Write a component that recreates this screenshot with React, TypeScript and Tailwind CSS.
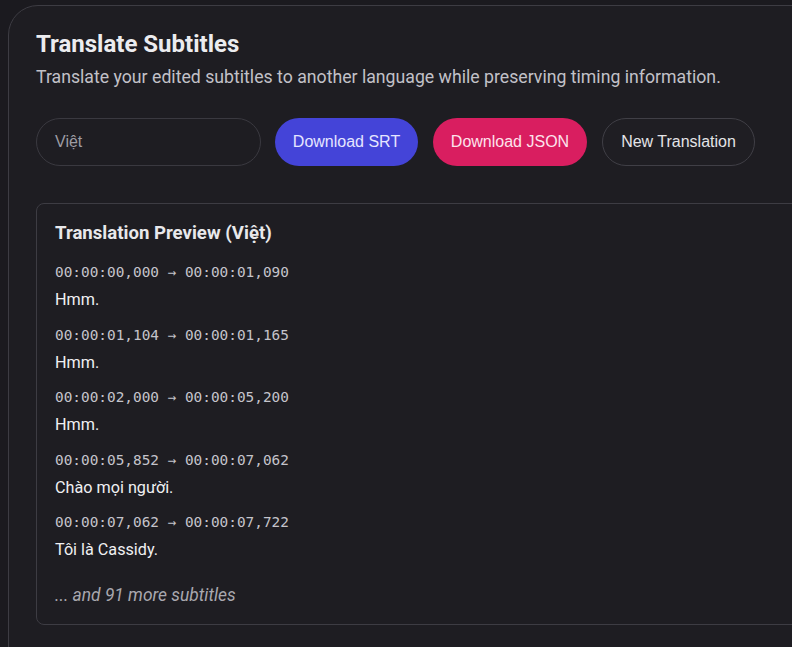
import React from "react";

const entries = [
  { t: "00:00:00,000 → 00:00:01,090", s: "Hmm." },
  { t: "00:00:01,104 → 00:00:01,165", s: "Hmm." },
  { t: "00:00:02,000 → 00:00:05,200", s: "Hmm." },
  { t: "00:00:05,852 → 00:00:07,062", s: "Chào mọi người." },
  { t: "00:00:07,062 → 00:00:07,722", s: "Tôi là Cassidy." },
];

export default function App() {
  return (
    <div className="w-[792px] h-[647px] overflow-hidden bg-[#1b1a1f] pl-[8px] pt-[5px]" style={{ fontFamily: "Roboto, 'Noto Sans', sans-serif" }}>
      <div className="w-[830px] h-[680px] rounded-[30px] border border-[#3d3c43] bg-[#1e1d22] pl-[27px] pt-[24px]">
        <h1 className="text-[24px] leading-[28px] font-bold text-[#ececef]">Translate Subtitles</h1>
        <p className="mt-[7px] text-[17.7px] leading-[24px] text-[#c2c1c8]">
          Translate your edited subtitles to another language while preserving timing information.
        </p>
        <div className="mt-[29px] flex items-center gap-[14px]" style={{ fontFamily: "'Liberation Sans', Arial, sans-serif" }}>
          <div className="w-[225px] h-[48px] rounded-full border border-[#3a3940] flex items-center pl-[18px] text-[16px] text-[#9d9ca3]">
            Việt
          </div>
          <button className="h-[48px] w-[143px] rounded-full bg-[#4444d8] text-[16px] text-[#e6e6ff]">Download SRT</button>
          <button className="ml-[1px] h-[48px] w-[154px] rounded-full bg-[#d91e60] text-[16px] text-[#fde3ec]">Download JSON</button>
          <button className="ml-[1px] h-[48px] w-[153px] rounded-full border border-[#403f46] bg-[#1f1e23] text-[16px] text-[#e4e4e7]">New Translation</button>
        </div>
        <div className="mt-[37px] w-[780px] rounded-[8px] border border-[#3d3c43] bg-[#1e1d22] pl-[18px] pt-[17px] pb-[17px]">
          <h2 className="text-[18.6px] leading-[24px] font-bold text-[#e8e8eb]">Translation Preview (Việt)</h2>
          <div className="mt-[17px] flex flex-col gap-[12.5px]">
            {entries.map((e, i) => (
              <div key={i} className="flex flex-col gap-[6px]">
                <div className="text-[14.4px] leading-[20px] text-[#c5c4cb]" style={{ fontFamily: "'DejaVu Sans Mono', monospace" }}>
                  {e.t}
                </div>
                <div className="text-[16.2px] leading-[24px] text-[#f0f0f2]">{e.s}</div>
              </div>
            ))}
          </div>
          <div className="mt-[21px] text-[17.4px] leading-[24px] italic text-[#a9a8af]">... and 91 more subtitles</div>
        </div>
      </div>
    </div>
  );
}
